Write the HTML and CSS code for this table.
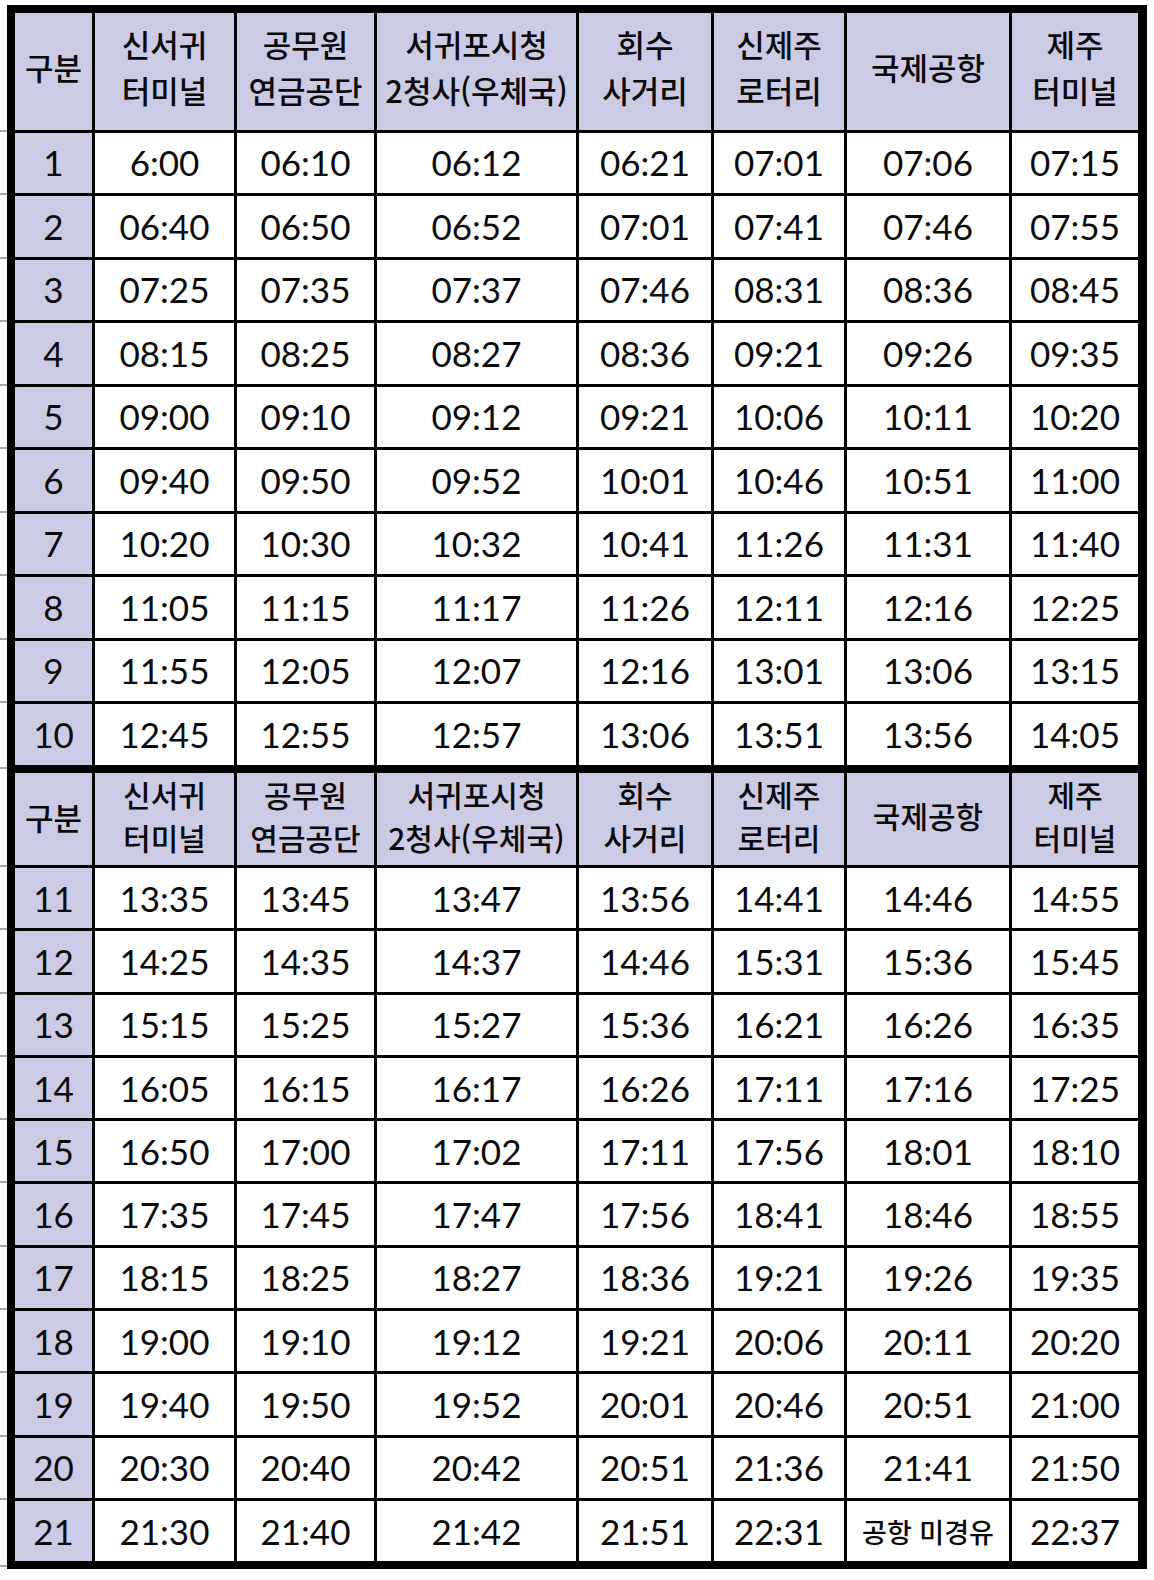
FILE: index.html
```html
<!DOCTYPE html>
<html lang="ko">
<head>
<meta charset="utf-8">
<title>시간표</title>
<link rel="stylesheet" href="styles.css">
</head>
<body>
<div class="sheet">
  <div class="block block-top">
    <div class="cell head">구분</div>
    <div class="cell head">신서귀<br>터미널</div>
    <div class="cell head">공무원<br>연금공단</div>
    <div class="cell head">서귀포시청<br>2청사(우체국)</div>
    <div class="cell head">회수<br>사거리</div>
    <div class="cell head">신제주<br>로터리</div>
    <div class="cell head">국제공항</div>
    <div class="cell head">제주<br>터미널</div>

    <div class="cell no">1</div><div class="cell">6:00</div><div class="cell">06:10</div><div class="cell">06:12</div><div class="cell">06:21</div><div class="cell">07:01</div><div class="cell">07:06</div><div class="cell">07:15</div>
    <div class="cell no">2</div><div class="cell">06:40</div><div class="cell">06:50</div><div class="cell">06:52</div><div class="cell">07:01</div><div class="cell">07:41</div><div class="cell">07:46</div><div class="cell">07:55</div>
    <div class="cell no">3</div><div class="cell">07:25</div><div class="cell">07:35</div><div class="cell">07:37</div><div class="cell">07:46</div><div class="cell">08:31</div><div class="cell">08:36</div><div class="cell">08:45</div>
    <div class="cell no">4</div><div class="cell">08:15</div><div class="cell">08:25</div><div class="cell">08:27</div><div class="cell">08:36</div><div class="cell">09:21</div><div class="cell">09:26</div><div class="cell">09:35</div>
    <div class="cell no">5</div><div class="cell">09:00</div><div class="cell">09:10</div><div class="cell">09:12</div><div class="cell">09:21</div><div class="cell">10:06</div><div class="cell">10:11</div><div class="cell">10:20</div>
    <div class="cell no">6</div><div class="cell">09:40</div><div class="cell">09:50</div><div class="cell">09:52</div><div class="cell">10:01</div><div class="cell">10:46</div><div class="cell">10:51</div><div class="cell">11:00</div>
    <div class="cell no">7</div><div class="cell">10:20</div><div class="cell">10:30</div><div class="cell">10:32</div><div class="cell">10:41</div><div class="cell">11:26</div><div class="cell">11:31</div><div class="cell">11:40</div>
    <div class="cell no">8</div><div class="cell">11:05</div><div class="cell">11:15</div><div class="cell">11:17</div><div class="cell">11:26</div><div class="cell">12:11</div><div class="cell">12:16</div><div class="cell">12:25</div>
    <div class="cell no">9</div><div class="cell">11:55</div><div class="cell">12:05</div><div class="cell">12:07</div><div class="cell">12:16</div><div class="cell">13:01</div><div class="cell">13:06</div><div class="cell">13:15</div>
    <div class="cell no">10</div><div class="cell">12:45</div><div class="cell">12:55</div><div class="cell">12:57</div><div class="cell">13:06</div><div class="cell">13:51</div><div class="cell">13:56</div><div class="cell">14:05</div>
  </div>
  <div class="block block-bottom">
    <div class="cell head first">구분</div>
    <div class="cell head">신서귀<br>터미널</div>
    <div class="cell head">공무원<br>연금공단</div>
    <div class="cell head">서귀포시청<br>2청사(우체국)</div>
    <div class="cell head">회수<br>사거리</div>
    <div class="cell head">신제주<br>로터리</div>
    <div class="cell head">국제공항</div>
    <div class="cell head">제주<br>터미널</div>

    <div class="cell no">11</div><div class="cell">13:35</div><div class="cell">13:45</div><div class="cell">13:47</div><div class="cell">13:56</div><div class="cell">14:41</div><div class="cell">14:46</div><div class="cell">14:55</div>
    <div class="cell no">12</div><div class="cell">14:25</div><div class="cell">14:35</div><div class="cell">14:37</div><div class="cell">14:46</div><div class="cell">15:31</div><div class="cell">15:36</div><div class="cell">15:45</div>
    <div class="cell no">13</div><div class="cell">15:15</div><div class="cell">15:25</div><div class="cell">15:27</div><div class="cell">15:36</div><div class="cell">16:21</div><div class="cell">16:26</div><div class="cell">16:35</div>
    <div class="cell no">14</div><div class="cell">16:05</div><div class="cell">16:15</div><div class="cell">16:17</div><div class="cell">16:26</div><div class="cell">17:11</div><div class="cell">17:16</div><div class="cell">17:25</div>
    <div class="cell no">15</div><div class="cell">16:50</div><div class="cell">17:00</div><div class="cell">17:02</div><div class="cell">17:11</div><div class="cell">17:56</div><div class="cell">18:01</div><div class="cell">18:10</div>
    <div class="cell no">16</div><div class="cell">17:35</div><div class="cell">17:45</div><div class="cell">17:47</div><div class="cell">17:56</div><div class="cell">18:41</div><div class="cell">18:46</div><div class="cell">18:55</div>
    <div class="cell no">17</div><div class="cell">18:15</div><div class="cell">18:25</div><div class="cell">18:27</div><div class="cell">18:36</div><div class="cell">19:21</div><div class="cell">19:26</div><div class="cell">19:35</div>
    <div class="cell no">18</div><div class="cell">19:00</div><div class="cell">19:10</div><div class="cell">19:12</div><div class="cell">19:21</div><div class="cell">20:06</div><div class="cell">20:11</div><div class="cell">20:20</div>
    <div class="cell no">19</div><div class="cell">19:40</div><div class="cell">19:50</div><div class="cell">19:52</div><div class="cell">20:01</div><div class="cell">20:46</div><div class="cell">20:51</div><div class="cell">21:00</div>
    <div class="cell no">20</div><div class="cell">20:30</div><div class="cell">20:40</div><div class="cell">20:42</div><div class="cell">20:51</div><div class="cell">21:36</div><div class="cell">21:41</div><div class="cell">21:50</div>
    <div class="cell no last">21</div><div class="cell">21:30</div><div class="cell">21:40</div><div class="cell">21:42</div><div class="cell">21:51</div><div class="cell">22:31</div><div class="cell small">공항 미경유</div><div class="cell">22:37</div>
  </div>
</div>
</body>
</html>
```

FILE: styles.css
```css
html, body {
  margin: 0;
  padding: 0;
  background: #ffffff;
}

body {
  padding: 5px 0 0 7px;
  font-family: Lato, "Noto Sans CJK KR", sans-serif;
  color: #0a0a0a;
}

.sheet {
  width: 1140px;
  box-sizing: border-box;
  background: #000000;
  padding: 8px 9px 8px 8px;
  display: flex;
  flex-direction: column;
  gap: 8px;
}

.block {
  display: grid;
  grid-template-columns: 77px 139px 137px 199px 132px 130px 162px 126px;
  gap: 3px;
  background: #000000;
}

.block-top {
  grid-template-rows: 116.5px repeat(10, 60.5px);
}

.block-bottom {
  grid-template-rows: 92.5px repeat(11, 60.3px);
}

.cell {
  background: #ffffff;
  display: flex;
  align-items: center;
  justify-content: center;
  text-align: center;
  font-size: 35px;
  line-height: 1;
  overflow: hidden;
}

.head,
.no {
  background: #cccbe6;
}

.head {
  font-family: "Noto Sans CJK KR", sans-serif;
  font-weight: 500;
  font-size: 31px;
  line-height: 46px;
  padding-bottom: 8px;
  white-space: nowrap;
}

.block-bottom .head {
  font-size: 30px;
  line-height: 43px;
  padding-bottom: 6px;
  overflow: visible;
}

.block-bottom .head.first {
  font-size: 31px;
  padding-bottom: 4px;
}

.small {
  font-family: "Noto Sans CJK KR", sans-serif;
  font-weight: 500;
  font-size: 27px;
}

/* spreadsheet row ticks in the left margin */
.no,
.head.first {
  position: relative;
  overflow: visible;
}

.no::before,
.head.first::before,
.no.last::after {
  content: "";
  position: absolute;
  left: -15px;
  top: -3px;
  width: 7px;
  height: 2px;
  background: #a9a9a9;
}

.head.first::before {
  top: -6px;
}

.no.last::after {
  top: auto;
  bottom: -6px;
}
```
